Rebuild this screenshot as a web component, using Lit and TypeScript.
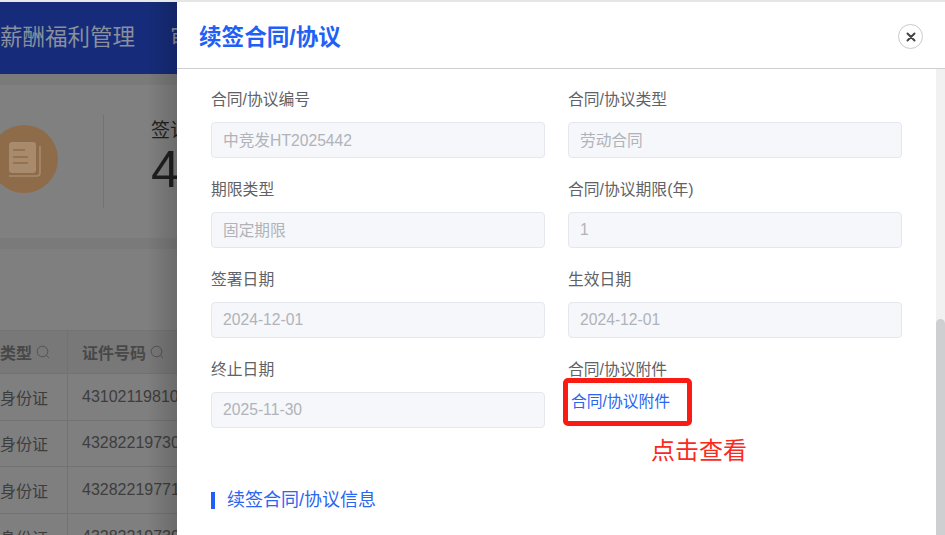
import { LitElement, html, css, svg } from "lit";
import { customElement } from "lit/decorators.js";

const searchIcon = svg`<svg class="q" viewBox="0 0 14 14" width="14" height="14" fill="none" stroke="#525252" stroke-width="1"><circle cx="6.5" cy="6.5" r="5.3"/><path d="M10.5 10.5l2.5 2.5"/></svg>`;

@customElement("app-root")
export class AppRoot extends LitElement {
  static styles = css`
    :host {
      display: block;
      width: 945px;
      height: 535px;
      font-family: "Liberation Sans", "Noto Sans CJK SC", sans-serif;
    }
    .page {
      position: relative;
      width: 945px;
      height: 535px;
      overflow: hidden;
      background: #7f7f7f;
    }
    .bg { width: 177px; height: 535px; overflow: hidden; position: relative; }
    .topstrip { height: 2px; background: #e8e8e8; }
    .nav {
      height: 72px;
      background: #162c7a;
      display: flex;
      align-items: center;
      gap: 35px;
      font-size: 22.5px;
      color: #8a8f9c;
      white-space: nowrap;
      padding-bottom: 6px;
      box-sizing: border-box;
    }
    .band { height: 11px; background: #7a7a7a; }
    .stat {
      height: 153px;
      background: #808080;
      display: flex;
      align-items: center;
    }
    .circle {
      width: 68px; height: 68px; border-radius: 50%;
      background: #8e6c49;
      margin: -5px 0 0 -10px;
      flex: none;
      display: flex; align-items: center; justify-content: center;
    }
    .vline { width: 1px; height: 93px; background: #737373; margin-left: 45px; flex: none; }
    .stat-text { margin: -9px 0 0 47px; color: #1f1f1f; white-space: nowrap; }
    .stat-text .l { font-size: 19px; line-height: 24px; }
    .stat-text .n { font-size: 52px; line-height: 52px; }
    .tbl { background: #7f7f7f; padding-top: 81px; }
    .row {
      display: grid;
      grid-template-columns: 67px 110px;
      height: 46.67px;
      border-bottom: 1px solid #727272;
      box-sizing: border-box;
      color: #3d3d3d;
      font-size: 16px;
      white-space: nowrap;
    }
    .row.head { height: 44px; background: #787878; font-weight: bold; color: #484848; border-top: 1px solid #747474; padding-bottom: 1px; }
    .row > div { display: flex; align-items: center; overflow: hidden; }
    .row > div + div { border-left: 1px solid #727272; padding-left: 14px; }
    .row .q { margin-left: 4px; flex: none; }

    .shade {
      position: absolute;
      left: 147px; top: 2px; bottom: 0; width: 30px;
      background: linear-gradient(to right, rgba(0,0,0,0), rgba(0,0,0,0.16));
      pointer-events: none;
    }
    .drawer {
      position: absolute;
      left: 177px; top: 0; right: 0; bottom: 0;
      background: #fff;
      display: flex;
      flex-direction: column;
    }
    .dtop { height: 2px; background: #e6e6e6; flex: none; }
    .dhead {
      height: 67px;
      flex: none;
      box-sizing: border-box;
      border-bottom: 1px solid #cfcfcf;
      display: flex;
      align-items: center;
      justify-content: space-between;
      padding: 0 22px;
    }
    .title { font-size: 22.6px; font-weight: bold; color: #2060f5; }
    .close {
      width: 25px; height: 25px; box-sizing: border-box;
      margin-top: 3px;
      border: 1.5px solid #cacaca; border-radius: 50%;
      display: flex; align-items: center; justify-content: center;
    }
    .dbody { flex: 1; display: flex; min-height: 0; }
    .content { flex: 1; padding: 20px 34px 0 34px; }
    .scroll { width: 9px; flex: none; background: #f1f1f1; display: flex; flex-direction: column; justify-content: flex-end; }
    .thumb { height: 216px; background: #cecfd1; border-radius: 5px 5px 0 0; }
    .grid {
      display: grid;
      grid-template-columns: 334px 334px;
      column-gap: 23px;
      row-gap: 21px;
    }
    .label { font-size: 15.8px; line-height: 20px; color: #606266; padding-top: 1px; margin-bottom: 12px; }
    .input {
      height: 36px; box-sizing: border-box;
      background: #f5f7fa;
      border: 1px solid #e4e7ed;
      border-radius: 4px;
      padding: 0 11px 1px;
      display: flex; align-items: center;
      font-size: 15.7px;
      color: #b0b3b9;
    }
    .attach { position: relative; }
    .link { font-size: 15.8px; color: #2a66f0; line-height: 20px; margin: 1px 0 0 3px; }
    .redbox {
      position: absolute;
      left: -5px; top: 19px; width: 129px; height: 48px;
      box-sizing: border-box;
      border: 5px solid #fa1c14;
      border-radius: 5px;
    }
    .click {
      position: absolute;
      left: 83px; top: 76px;
      font-size: 24px; line-height: 32px;
      color: #fa2a1e;
      white-space: nowrap;
    }
    .section {
      margin-top: 60px;
      display: flex; align-items: center;
      font-size: 18px;
      line-height: 24px;
      color: #2a66f0;
    }
    .section::before {
      content: "";
      width: 4px; height: 17px;
      background: #2060f5;
      margin-right: 12px;
    }
  `;

  render() {
    const fields: [string, string][] = [
      ["合同/协议编号", "中竞发HT2025442"],
      ["合同/协议类型", "劳动合同"],
      ["期限类型", "固定期限"],
      ["合同/协议期限(年)", "1"],
      ["签署日期", "2024-12-01"],
      ["生效日期", "2024-12-01"],
    ];
    const rows = ["43102119810", "43282219730", "43282219771", "43282219730"];
    return html`
      <div class="page">
        <div class="bg">
          <div class="topstrip"></div>
          <div class="nav"><span>薪酬福利管理</span><span>审批</span></div>
          <div class="band"></div>
          <div class="stat">
            <div class="circle">
              <svg width="34" height="38" viewBox="0 0 34 38" fill="none">
                <rect x="2" y="2" width="27" height="31" rx="3" fill="#a88a6c" />
                <path d="M33 6v27a3 3 0 0 1-3 3H2" stroke="#a88a6c" stroke-width="1.6" />
                <path d="M6 10h12M6 17h15M6 23h15" stroke="#8e6c49" stroke-width="1.6" />
              </svg>
            </div>
            <div class="vline"></div>
            <div class="stat-text">
              <div class="l">签订</div>
              <div class="n">4</div>
            </div>
          </div>
          <div class="band"></div>
          <div class="tbl">
            <div class="row head">
              <div>类型${searchIcon}</div>
              <div>证件号码${searchIcon}</div>
            </div>
            ${rows.map((r) => html`<div class="row"><div>身份证</div><div>${r}</div></div>`)}
          </div>
        </div>
        <div class="shade"></div>
        <div class="drawer">
          <div class="dtop"></div>
          <div class="dhead">
            <div class="title">续签合同/协议</div>
            <div class="close">
              <svg width="10" height="10" viewBox="0 0 10 10" stroke="#444" stroke-width="2" stroke-linecap="round">
                <path d="M1.5 1.5l7 7M8.5 1.5l-7 7" />
              </svg>
            </div>
          </div>
          <div class="dbody">
            <div class="content">
              <div class="grid">
                ${fields.map(
                  ([l, v]) => html`<div><div class="label">${l}</div><div class="input">${v}</div></div>`
                )}
                <div><div class="label">终止日期</div><div class="input">2025-11-30</div></div>
                <div class="attach">
                  <div class="label">合同/协议附件</div>
                  <div class="link">合同/协议附件</div>
                  <div class="redbox"></div>
                  <div class="click">点击查看</div>
                </div>
              </div>
              <div class="section">续签合同/协议信息</div>
            </div>
            <div class="scroll"><div class="thumb"></div></div>
          </div>
        </div>
      </div>
    `;
  }
}
